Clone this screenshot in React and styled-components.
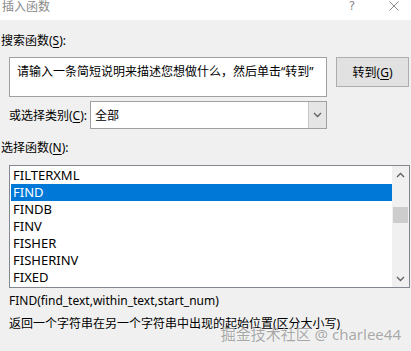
import React from 'react';
import styled, { createGlobalStyle } from 'styled-components';

const GlobalStyle = createGlobalStyle`
  html, body {
    margin: 0;
    padding: 0;
    background: #f0f0f0;
  }
  body {
    font-family: "Noto Sans", "Noto Sans CJK SC", sans-serif;
    font-size: 12px;
    color: #000;
  }
`;

const Dialog = styled.div`
  position: relative;
  width: 411px;
  height: 351px;
  overflow: hidden;
  background: #f0f0f0;
`;

const TitleBar = styled.div`
  display: flex;
  align-items: flex-start;
  height: 20px;
  background: #fff;
`;

const Title = styled.div`
  flex: 1;
  padding-left: 2px;
  font-size: 12px;
  line-height: 14px;
  color: #8a8a8a;
`;

const HelpButton = styled.div`
  width: 12px;
  margin-right: 31px;
  text-align: center;
  color: #8a8a8a;
  font-family: "DejaVu Sans", sans-serif;
  font-size: 12px;
  line-height: 12px;
`;

const CloseButton = styled.div`
  width: 10px;
  margin-right: 12px;
  padding-top: 1px;
  display: flex;
`;

const Body = styled.div`
  display: flex;
  flex-direction: column;
  padding: 0 2px 0 1px;
`;

const Label = styled.div`
  margin-top: ${p => p.top}px;
  line-height: 17px;
  height: 17px;
  white-space: nowrap;
`;

const Key = styled.span`
  text-decoration: underline;
  text-underline-offset: 2px;
`;

const SearchRow = styled.div`
  display: flex;
  align-items: flex-start;
  margin-top: 8px;
  margin-left: 8px;
`;

const SearchBox = styled.div`
  box-sizing: border-box;
  width: 318px;
  height: 40px;
  background: #fff;
  border: 1px solid #a0a0a0;
  padding: 5px 7px;
  line-height: 17px;
  white-space: nowrap;
`;

const Button = styled.div`
  box-sizing: border-box;
  width: 73px;
  height: 30px;
  margin-left: 9px;
  background: #e1e1e1;
  border: 1px solid #adadad;
  display: flex;
  align-items: center;
  justify-content: center;
`;

const CategoryRow = styled.div`
  display: flex;
  align-items: center;
  margin-top: 4px;
  margin-left: 8px;
`;

const CategoryLabel = styled.div`
  width: 81px;
  white-space: nowrap;
`;

const Select = styled.div`
  box-sizing: border-box;
  width: 237px;
  height: 28px;
  display: flex;
  background: #fff;
  border: 1px solid #a0a0a0;
`;

const SelectValue = styled.div`
  flex: 1;
  display: flex;
  align-items: center;
  padding-left: 4px;
`;

const SelectArrow = styled.div`
  width: 17px;
  background: #e5e5e5;
  border-left: 1px solid #c8c8c8;
  display: flex;
  align-items: center;
  justify-content: center;
`;

const List = styled.div`
  box-sizing: border-box;
  display: flex;
  margin-top: 9px;
  margin-left: 8px;
  width: 401px;
  height: 123px;
  background: #fff;
  border: 1px solid #828790;
`;

const Items = styled.div`
  flex: 1;
  padding: 1px 0 0 1px;
`;

const Item = styled.div`
  height: 17px;
  line-height: 17px;
  padding-left: 2px;
  font-size: 13px;
  background: ${p => (p.selected ? '#0078d7' : 'transparent')};
  color: ${p => (p.selected ? '#fff' : '#000')};
`;

const Scrollbar = styled.div`
  width: 17px;
  display: flex;
  flex-direction: column;
  align-items: center;
  background: #f0f0f0;
`;

const ScrollArrow = styled.div`
  height: 17px;
  width: 17px;
  display: flex;
  align-items: center;
  justify-content: center;
`;

const ScrollTrack = styled.div`
  flex: 1;
  width: 100%;
  display: flex;
  flex-direction: column;
  align-items: center;
`;

const Thumb = styled.div`
  margin-top: ${p => p.offset}px;
  width: 15px;
  height: 16px;
  background: #cdcdcd;
`;

const Info = styled.div`
  margin-top: ${p => p.top}px;
  margin-left: 8px;
  line-height: 17px;
  white-space: nowrap;
`;

const Watermark = styled.div`
  position: absolute;
  right: 10px;
  top: 325px;
  font-size: 15px;
  line-height: 18px;
  color: rgba(110, 110, 110, 0.6);
  text-shadow: 0 0 1px rgba(255, 255, 255, 0.9);
  white-space: nowrap;
`;

const Chevron = ({ up }) => (
  <svg width="9" height="6" viewBox="0 0 9 6">
    <path
      d={up ? 'M1 5 L4.5 1.5 L8 5' : 'M1 1 L4.5 4.5 L8 1'}
      fill="none"
      stroke="#606060"
      strokeWidth="1.3"
    />
  </svg>
);

const CloseIcon = () => (
  <svg width="10" height="10" viewBox="0 0 10 10">
    <path d="M0.5 0.5 L9.5 9.5 M9.5 0.5 L0.5 9.5" stroke="#8a8a8a" strokeWidth="1" fill="none" />
  </svg>
);

const functions = ['FILTERXML', 'FIND', 'FINDB', 'FINV', 'FISHER', 'FISHERINV', 'FIXED'];

const App = () => (
  <>
    <GlobalStyle />
    <Dialog>
      <TitleBar>
        <Title>插入函数</Title>
        <HelpButton>?</HelpButton>
        <CloseButton>
          <CloseIcon />
        </CloseButton>
      </TitleBar>
      <Body>
        <Label top={12}>
          搜索函数(<Key>S</Key>):
        </Label>
        <SearchRow>
          <SearchBox>请输入一条简短说明来描述您想做什么，然后单击“转到”</SearchBox>
          <Button>
            转到(<Key>G</Key>)
          </Button>
        </SearchRow>
        <CategoryRow>
          <CategoryLabel>
            或选择类别(<Key>C</Key>):
          </CategoryLabel>
          <Select>
            <SelectValue>全部</SelectValue>
            <SelectArrow>
              <Chevron />
            </SelectArrow>
          </Select>
        </CategoryRow>
        <Label top={10}>
          选择函数(<Key>N</Key>):
        </Label>
        <List>
          <Items>
            {functions.map(f => (
              <Item key={f} selected={f === 'FIND'}>
                {f}
              </Item>
            ))}
          </Items>
          <Scrollbar>
            <ScrollArrow>
              <Chevron up />
            </ScrollArrow>
            <ScrollTrack>
              <Thumb offset={24} />
            </ScrollTrack>
            <ScrollArrow>
              <Chevron />
            </ScrollArrow>
          </Scrollbar>
        </List>
        <Info top={4}>FIND(find_text,within_text,start_num)</Info>
        <Info top={6}>返回一个字符串在另一个字符串中出现的起始位置(区分大小写)</Info>
      </Body>
      <Watermark>掘金技术社区 @ charlee44</Watermark>
    </Dialog>
  </>
);

export default App;
